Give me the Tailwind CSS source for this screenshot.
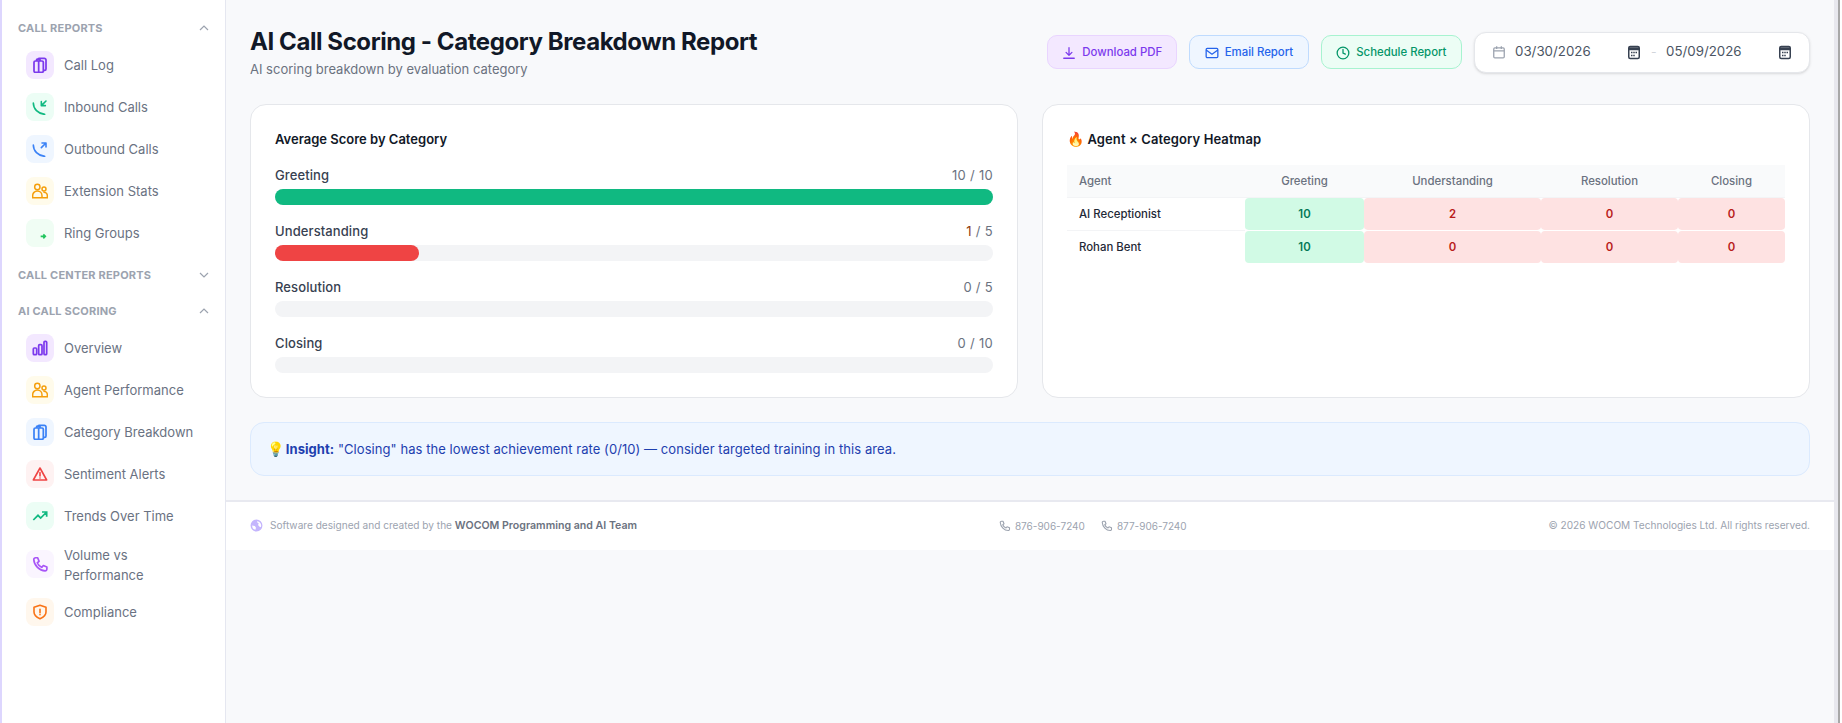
<!DOCTYPE html>
<html lang="en">
<head>
    <meta charset="UTF-8">
    <title>Category Breakdown</title>
    <script src="https://cdn.jsdelivr.net/npm/@tailwindcss/browser@4"></script>
</head>
<body class="h-[723px] overflow-hidden bg-[#f8f9fb] font-['Inter',sans-serif] text-[13px] text-gray-500">
<div class="flex h-[723px]">
    <!-- Sidebar -->
    <aside class="w-[226px] shrink-0 bg-white border-l-2 border-l-[#ddd6fe] border-r border-r-[#e5e7f0] pl-[16px] pr-[16px] pt-[18px]">
        <div class="flex items-center justify-between h-[20px] text-[11px] font-bold tracking-[0.2px] text-[#9ca3af]">
            <span>CALL REPORTS</span>
            <svg class="w-[10px] h-[10px]" viewBox="0 0 10 10" fill="none" stroke="#9ca3af" stroke-width="1.2"><path d="M1 7l4-4 4 4"/></svg>
        </div>
        <nav class="mt-[6px]">
            <a class="flex items-center gap-[10px] h-[42px] pl-[8px]">
                <span class="w-[28px] h-[28px] rounded-[8px] bg-[#f3e8ff] flex items-center justify-center">
                    <svg class="w-[16px] h-[16px]" viewBox="0 0 24 24" fill="none" stroke="#7c3aed" stroke-width="2.6" stroke-linejoin="round"><path d="M9 5V3.500A1.500 1.500 0 0110.500 2h8A2.500 2.500 0 0121 4.500V18a2 2 0 01-2 2h-1"/><rect x="3" y="6" width="14" height="17" rx="2"/><path d="M7 6V3.500h5V6M10 6v17"/></svg>
                </span>
                <span class="pt-[1px]">Call Log</span>
            </a>
            <a class="flex items-center gap-[10px] h-[42px] pl-[8px]">
                <span class="w-[28px] h-[28px] rounded-[8px] bg-[#ecfdf5] flex items-center justify-center">
                    <svg class="w-[16px] h-[16px]" viewBox="0 0 24 24" fill="none" stroke="#10b981" stroke-width="2.4" stroke-linecap="round" stroke-linejoin="round"><path d="M2 6c0 9 7 16 17 17"/><path d="M21 3l-7 7M14 4v6h6"/></svg>
                </span>
                <span class="pt-[1px]">Inbound Calls</span>
            </a>
            <a class="flex items-center gap-[10px] h-[42px] pl-[8px]">
                <span class="w-[28px] h-[28px] rounded-[8px] bg-[#eff6ff] flex items-center justify-center">
                    <svg class="w-[16px] h-[16px]" viewBox="0 0 24 24" fill="none" stroke="#3b82f6" stroke-width="2.4" stroke-linecap="round" stroke-linejoin="round"><path d="M2 6c0 9 7 16 17 17"/><path d="M14 10l7-7M15 3h6v6"/></svg>
                </span>
                <span class="pt-[1px]">Outbound Calls</span>
            </a>
            <a class="flex items-center gap-[10px] h-[42px] pl-[8px]">
                <span class="w-[28px] h-[28px] rounded-[8px] bg-[#fffbeb] flex items-center justify-center">
                    <svg class="w-[16px] h-[16px]" viewBox="0 0 24 24" fill="none" stroke="#f59e0b" stroke-width="2.2"><circle cx="8" cy="6" r="4"/><circle cx="18" cy="9" r="3"/><path d="M1 22v-3a6 6 0 0114 0v3zM17 14a5 5 0 016 5v3h-8"/></svg>
                </span>
                <span class="pt-[1px]">Extension Stats</span>
            </a>
            <a class="flex items-center gap-[10px] h-[42px] pl-[8px]">
                <span class="w-[28px] h-[28px] rounded-[8px] bg-[#f0fdf4] flex items-center justify-center">
                    <svg class="w-[16px] h-[16px]" viewBox="0 0 24 24" fill="none" stroke="#22c55e" stroke-width="2.4"><path d="M13 17h7M17 14l3 3-3 3"/></svg>
                </span>
                <span class="pt-[1px]">Ring Groups</span>
            </a>
        </nav>
        <div class="mt-[11px] flex items-center justify-between h-[20px] text-[11px] font-bold tracking-[0.2px] text-[#9ca3af]">
            <span>CALL CENTER REPORTS</span>
            <svg class="w-[10px] h-[10px]" viewBox="0 0 10 10" fill="none" stroke="#9ca3af" stroke-width="1.2"><path d="M1 3l4 4 4-4"/></svg>
        </div>
        <div class="mt-[16px] flex items-center justify-between h-[20px] text-[11px] font-bold tracking-[0.2px] text-[#9ca3af]">
            <span>AI CALL SCORING</span>
            <svg class="w-[10px] h-[10px]" viewBox="0 0 10 10" fill="none" stroke="#9ca3af" stroke-width="1.2"><path d="M1 7l4-4 4 4"/></svg>
        </div>
        <nav class="mt-[6px]">
            <a class="flex items-center gap-[10px] h-[42px] pl-[8px]">
                <span class="w-[28px] h-[28px] rounded-[8px] bg-[#f3e8ff] flex items-center justify-center">
                    <svg class="w-[16px] h-[16px]" viewBox="0 0 24 24" fill="none" stroke="#7c3aed" stroke-width="2.6"><rect x="2" y="12" width="5" height="10" rx="1.500"/><rect x="10" y="7" width="5" height="15" rx="1.500"/><rect x="18" y="2" width="4" height="20" rx="1.500"/></svg>
                </span>
                <span class="pt-[1px]">Overview</span>
            </a>
            <a class="flex items-center gap-[10px] h-[42px] pl-[8px]">
                <span class="w-[28px] h-[28px] rounded-[8px] bg-[#fffbeb] flex items-center justify-center">
                    <svg class="w-[16px] h-[16px]" viewBox="0 0 24 24" fill="none" stroke="#f59e0b" stroke-width="2.2"><circle cx="8" cy="6" r="4"/><circle cx="18" cy="9" r="3"/><path d="M1 22v-3a6 6 0 0114 0v3zM17 14a5 5 0 016 5v3h-8"/></svg>
                </span>
                <span class="pt-[1px]">Agent Performance</span>
            </a>
            <a class="flex items-center gap-[10px] h-[42px] pl-[8px]">
                <span class="w-[28px] h-[28px] rounded-[8px] bg-[#eff6ff] flex items-center justify-center">
                    <svg class="w-[16px] h-[16px]" viewBox="0 0 24 24" fill="none" stroke="#3b82f6" stroke-width="2.6" stroke-linejoin="round"><path d="M9 5V3.500A1.500 1.500 0 0110.500 2h8A2.500 2.500 0 0121 4.500V18a2 2 0 01-2 2h-1"/><rect x="3" y="6" width="14" height="17" rx="2"/><path d="M7 6V3.500h5V6M10 6v17"/></svg>
                </span>
                <span class="pt-[1px]">Category Breakdown</span>
            </a>
            <a class="flex items-center gap-[10px] h-[42px] pl-[8px]">
                <span class="w-[28px] h-[28px] rounded-[8px] bg-[#fef2f2] flex items-center justify-center">
                    <svg class="w-[16px] h-[16px]" viewBox="0 0 24 24" fill="none" stroke="#ef4444" stroke-width="2.4" stroke-linejoin="round" stroke-linecap="round"><path d="M12 3L2 21h20z"/><path d="M12 10v5M12 18v.01"/></svg>
                </span>
                <span class="pt-[1px]">Sentiment Alerts</span>
            </a>
            <a class="flex items-center gap-[10px] h-[42px] pl-[8px]">
                <span class="w-[28px] h-[28px] rounded-[8px] bg-[#ecfdf5] flex items-center justify-center">
                    <svg class="w-[16px] h-[16px]" viewBox="0 0 24 24" fill="none" stroke="#10b981" stroke-width="2.6"><path d="M2 18l7-7 4 4 9-9M15 6h7v7"/></svg>
                </span>
                <span class="pt-[1px]">Trends Over Time</span>
            </a>
            <a class="flex items-center gap-[10px] h-[54px] pl-[8px] leading-[20px]">
                <span class="w-[28px] h-[28px] shrink-0 rounded-[8px] bg-[#faf5ff] flex items-center justify-center">
                    <svg class="w-[17px] h-[17px]" viewBox="0 0 24 24" fill="none" stroke="#a855f7" stroke-width="2.4" stroke-linecap="round" stroke-linejoin="round"><path d="M5 2.500h3l2 5-2.500 2a11 11 0 006.500 6.500l2-2.500 5 2v3a2.500 2.500 0 01-2.500 2.500C10.500 21 3 13.500 2.500 5A2.500 2.500 0 015 2.500z"/></svg>
                </span>
                <span class="pt-[1px]">Volume vs<br>Performance</span>
            </a>
            <a class="flex items-center gap-[10px] h-[42px] pl-[8px]">
                <span class="w-[28px] h-[28px] rounded-[8px] bg-[#fff7ed] flex items-center justify-center">
                    <svg class="w-[16px] h-[16px]" viewBox="0 0 24 24" fill="none" stroke="#f97316" stroke-width="2.4" stroke-linejoin="round" stroke-linecap="round"><path d="M12 2l9 3v7c0 5-4 8-9 10-5-2-9-5-9-10V5z"/><path d="M12 8v5M12 16v.01"/></svg>
                </span>
                <span class="pt-[1px]">Compliance</span>
            </a>
        </nav>
    </aside>

    <!-- Main -->
    <main class="w-[1608px] shrink-0">
        <div class="px-[24px] pt-[24px]">
            <!-- Header -->
            <div class="flex items-center justify-between h-[56px]">
                <div class="pt-[2px]">
                    <h1 class="text-[24px] leading-[30px] font-bold text-[#111827] tracking-[-0.42px]">AI Call Scoring - Category Breakdown Report</h1>
                    <p class="text-[13px] leading-[20px] text-[#6b7280] mt-[2px]">AI scoring breakdown by evaluation category</p>
                </div>
                <div class="flex items-center gap-[12px]">
                    <button class="flex items-center gap-[6px] h-[34px] pt-[1px] px-[14px] rounded-[10px] border border-[#e9d5ff] bg-[#f3e8ff] text-[11.4px] font-medium text-[#7c3aed]">
                        <svg class="w-[14px] h-[14px]" viewBox="0 0 24 24" fill="none" stroke="#7c3aed" stroke-width="2.2" stroke-linecap="round" stroke-linejoin="round"><path d="M12 3v13M7 11l5 5 5-5M3 21h18"/></svg>
                        Download PDF
                    </button>
                    <button class="flex items-center gap-[6px] h-[34px] pt-[1px] px-[14.5px] rounded-[10px] border border-[#bfdbfe] bg-[#eff6ff] text-[11.4px] font-medium text-[#2563eb]">
                        <svg class="w-[14px] h-[14px]" viewBox="0 0 24 24" fill="none" stroke="#2563eb" stroke-width="2.2" stroke-linejoin="round"><rect x="2" y="4" width="20" height="16" rx="2"/><path d="M2 7l10 7 10-7"/></svg>
                        Email Report
                    </button>
                    <button class="flex items-center gap-[6px] h-[34px] pt-[1px] px-[14.5px] rounded-[10px] border border-[#a7f3d0] bg-[#ecfdf5] text-[11.4px] font-medium text-[#059669]">
                        <svg class="w-[14px] h-[14px]" viewBox="0 0 24 24" fill="none" stroke="#059669" stroke-width="2.2" stroke-linecap="round"><circle cx="12" cy="12" r="10"/><path d="M12 6v6l4 2"/></svg>
                        Schedule Report
                    </button>
                    <div class="flex items-center h-[41px] w-[336px] pl-[17px] rounded-[12px] border border-[#e5e7eb] bg-white shadow-sm text-[13.3px] text-[#4b5563]">
                        <svg class="w-[14px] h-[14px] mr-[9px]" viewBox="0 0 24 24" fill="none" stroke="#9ca3af" stroke-width="2.2"><rect x="3" y="5" width="18" height="17" rx="2"/><path d="M3 10h18M8 2v5M16 2v5"/></svg>
                        <span class="w-[112px]">03/30/2026</span>
                        <svg class="w-[14px] h-[15px]" viewBox="0 0 18 20" fill="none"><rect x="2" y="2" width="14" height="16" rx="2" stroke="#374151" stroke-width="2"/><path d="M2 3h14v4H2z" fill="#374151"/><path d="M5 9h2v2H5zM8 9h2v2H8zM11 9h2v2h-2zM5 13h2v2H5zM8 13h2v2H8z" fill="#374151"/></svg>
                        <span class="ml-[10px] mr-[11px] w-[4px] text-[#d1d5db] text-[12px]">-</span>
                        <span class="w-[112px]">05/09/2026</span>
                        <svg class="w-[14px] h-[15px]" viewBox="0 0 18 20" fill="none"><rect x="2" y="2" width="14" height="16" rx="2" stroke="#374151" stroke-width="2"/><path d="M2 3h14v4H2z" fill="#374151"/><path d="M5 9h2v2H5zM8 9h2v2H8zM11 9h2v2h-2zM5 13h2v2H5zM8 13h2v2H8z" fill="#374151"/></svg>
                    </div>
                </div>
            </div>

            <!-- Cards -->
            <div class="grid grid-cols-2 gap-[24px] mt-[24px]">
                <div class="h-[294px] rounded-[16px] border border-[#e5e7eb] bg-white px-[24px] pt-[24px]">
                    <h3 class="text-[13px] leading-[20px] font-semibold text-[#111827]">Average Score by Category</h3>
                    <div class="mt-[16px]">
                        <div class="flex justify-between leading-[20px]"><span class="font-medium tracking-[0.1px] text-[#374151]">Greeting</span><span class="tracking-[0.3px] text-[#6b7280]">10 / 10</span></div>
                        <div class="mt-[4px] h-[16px] rounded-full bg-[#f3f4f6]"><div class="h-full rounded-full bg-[#10b981]" style="width:100%"></div></div>
                    </div>
                    <div class="mt-[16px]">
                        <div class="flex justify-between leading-[20px]"><span class="font-medium tracking-[0.1px] text-[#374151]">Understanding</span><span class="tracking-[0.3px] text-[#6b7280]"><span class="text-[#92400e]">1</span> / 5</span></div>
                        <div class="mt-[4px] h-[16px] rounded-full bg-[#f3f4f6]"><div class="h-full rounded-full bg-[#ef4444]" style="width:20%"></div></div>
                    </div>
                    <div class="mt-[16px]">
                        <div class="flex justify-between leading-[20px]"><span class="font-medium tracking-[0.1px] text-[#374151]">Resolution</span><span class="tracking-[0.3px] text-[#6b7280]">0 / 5</span></div>
                        <div class="mt-[4px] h-[16px] rounded-full bg-[#f3f4f6]"></div>
                    </div>
                    <div class="mt-[16px]">
                        <div class="flex justify-between leading-[20px]"><span class="font-medium tracking-[0.1px] text-[#374151]">Closing</span><span class="tracking-[0.3px] text-[#6b7280]">0 / 10</span></div>
                        <div class="mt-[4px] h-[16px] rounded-full bg-[#f3f4f6]"></div>
                    </div>
                </div>
                <div class="h-[294px] rounded-[16px] border border-[#e5e7eb] bg-white px-[24px] pt-[24px]">
                    <h3 class="text-[13px] leading-[20px] font-semibold tracking-[0.1px] text-[#111827]"><span class="text-[14px]">🔥</span> Agent × Category Heatmap</h3>
                    <table class="w-full table-fixed mt-[16px] text-[11.4px] border-separate border-spacing-0">
                        <thead>
                            <tr class="h-[33px] bg-[#f9fafb] text-[#6b7280]">
                                <th class="font-medium text-left pl-[12px] pt-[2px] w-[178px] border-b border-[#f3f4f6]">Agent</th>
                                <th class="font-medium pt-[2px] w-[119px] border-b border-[#f3f4f6]">Greeting</th>
                                <th class="font-medium pt-[2px] w-[177px] border-b border-[#f3f4f6]">Understanding</th>
                                <th class="font-medium pt-[2px] w-[137px] border-b border-[#f3f4f6]">Resolution</th>
                                <th class="font-medium pt-[2px] border-b border-[#f3f4f6]">Closing</th>
                            </tr>
                        </thead>
                        <tbody class="font-semibold text-center">
                            <tr class="h-[33px]">
                                <td class="text-left pl-[12px] pt-[2px] font-medium text-[#1f2937] border-b border-[#f3f4f6]">AI Receptionist</td>
                                <td class="rounded-[4px] pt-[2px] bg-clip-padding border-b border-white bg-[#d1fae5] text-[#047857]">10</td>
                                <td class="rounded-[4px] pt-[2px] bg-clip-padding border-b border-white bg-[#fee2e2] text-[#b91c1c]">2</td>
                                <td class="rounded-[4px] pt-[2px] bg-clip-padding border-b border-white bg-[#fee2e2] text-[#b91c1c]">0</td>
                                <td class="rounded-[4px] pt-[2px] bg-clip-padding border-b border-white bg-[#fee2e2] text-[#b91c1c]">0</td>
                            </tr>
                            <tr class="h-[32px]">
                                <td class="text-left pl-[12px] pt-[2px] font-medium text-[#1f2937]">Rohan Bent</td>
                                <td class="rounded-[4px] pt-[2px] bg-[#d1fae5] text-[#047857]">10</td>
                                <td class="rounded-[4px] pt-[2px] bg-[#fee2e2] text-[#b91c1c]">0</td>
                                <td class="rounded-[4px] pt-[2px] bg-[#fee2e2] text-[#b91c1c]">0</td>
                                <td class="rounded-[4px] pt-[2px] bg-[#fee2e2] text-[#b91c1c]">0</td>
                            </tr>
                        </tbody>
                    </table>
                </div>
            </div>

            <!-- Insight -->
            <div class="mt-[24px] flex items-center h-[54px] px-[16px] rounded-[14px] border border-[#dbeafe] bg-[#eff6ff] text-[13px] text-[#1e40af]">
                <span class="tracking-[0.06px]"><span class="text-[14px] mr-[-2px]">💡</span> <b class="font-bold">Insight:</b> "Closing" has the lowest achievement rate (0/10) — consider targeted training in this area.</span>
            </div>
        </div>

        <!-- Footer -->
        <footer class="mt-[24px] h-[50px] border-t-2 border-[#e8e9f0] bg-white flex items-center justify-between px-[24px] text-[10.1px] text-[#9ca3af]">
            <div class="flex items-center gap-[7px]">
                <svg class="w-[13px] h-[13px]" viewBox="0 0 24 24" fill="#c4b5fd"><path fill-rule="evenodd" d="M12 1a11 11 0 100 22 11 11 0 000-22zM4 12l5 1 2 3-1 4a8 8 0 01-6-8zm9-8a8 8 0 017 11l-3-1-2-3 1-3-3-2z"/></svg>
                <span>Software designed and created by the <b class="font-semibold text-[10.6px] text-[#6b7280]">WOCOM Programming and AI Team</b></span>
            </div>
            <div class="flex items-center gap-[16px] text-[10px]">
                <span class="flex items-center gap-[4px]"><svg class="w-[12px] h-[12px]" viewBox="0 0 24 24" fill="none" stroke="#9ca3af" stroke-width="2.2" stroke-linejoin="round"><path d="M5 2.500h3l2 5-2.500 2a11 11 0 006.500 6.500l2-2.500 5 2v3a2.500 2.500 0 01-2.500 2.500C10.500 21 3 13.500 2.500 5A2.500 2.500 0 015 2.500z"/></svg>876-906-7240</span>
                <span class="flex items-center gap-[4px]"><svg class="w-[12px] h-[12px]" viewBox="0 0 24 24" fill="none" stroke="#9ca3af" stroke-width="2.2" stroke-linejoin="round"><path d="M5 2.500h3l2 5-2.500 2a11 11 0 006.500 6.500l2-2.500 5 2v3a2.500 2.500 0 01-2.500 2.500C10.500 21 3 13.500 2.500 5A2.500 2.500 0 015 2.500z"/></svg>877-906-7240</span>
            </div>
            <span>© 2026 WOCOM Technologies Ltd. All rights reserved.</span>
        </footer>
    </main>

    <!-- Page scrollbar edge -->
    <div class="w-[4px] shrink-0 bg-[#e8e8ee]"></div>
    <div class="w-[2px] shrink-0 bg-[#a8a8a8]"></div>
    <div class="flex-1 bg-white"></div>
</div>
</body>
</html>
